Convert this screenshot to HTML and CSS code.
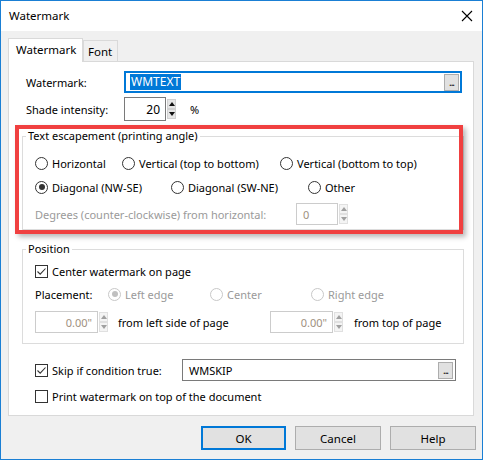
FILE: index.html
```html
<!DOCTYPE html>
<html>
<head>
<meta charset="utf-8">
<link rel="stylesheet" href="styles.css">
</head>
<body>
<div class="window">
  <div class="titlebar">
    <span class="title">Watermark</span>
    <svg class="close" width="12" height="12" viewBox="0 0 12 12"><path d="M1 1 L11 11 M11 1 L1 11" stroke="#000" stroke-width="1.1" fill="none"/></svg>
  </div>
  <div class="body">
    <div class="tabs">
      <div class="tab active">Watermark</div>
      <div class="tab">Font</div>
    </div>
    <div class="panel">
      <div class="row r-wm">
        <span class="lbl">Watermark:</span>
        <div class="input wm"><span class="sel">WMTEXT</span><span class="dots">...</span></div>
      </div>
      <div class="row r-shade">
        <span class="lbl">Shade intensity:</span>
        <div class="spinbox shade"><span class="val">20</span></div>
        <div class="arrows"><span class="up"></span><span class="down"></span></div>
        <span class="pct">%</span>
      </div>

      <div class="escwrap">
        <fieldset class="group esc">
          <legend>Text escapement (printing angle)</legend>
          <div class="opts r1">
            <span class="opt w-h"><i class="radio"></i>Horizontal</span>
            <span class="opt w-v1"><i class="radio"></i>Vertical (top to bottom)</span>
            <span class="opt"><i class="radio"></i>Vertical (bottom to top)</span>
          </div>
          <div class="opts r2">
            <span class="opt w-d1"><i class="radio on"></i>Diagonal (NW-SE)</span>
            <span class="opt w-d2"><i class="radio"></i>Diagonal (SW-NE)</span>
            <span class="opt"><i class="radio"></i>Other</span>
          </div>
          <div class="opts r3">
            <span class="dis deg">Degrees (counter-clockwise) from horizontal:</span>
            <div class="spinbox disbox degbox"><span class="val left">0</span></div>
            <div class="arrows dis-arrows"><span class="up"></span><span class="down"></span></div>
          </div>
        </fieldset>
        <div class="redbox"></div>
      </div>

      <fieldset class="group pos">
        <legend>Position</legend>
        <div class="opts c1">
          <span class="opt"><i class="check"><svg width="11" height="11" viewBox="0 0 11 11"><path d="M1.5 5.5 L4.2 8.2 L9.5 2.5" stroke="#333" stroke-width="1.1" fill="none"/></svg></i>Center watermark on page</span>
        </div>
        <div class="opts c2">
          <span class="plc">Placement:</span>
          <span class="opt dis w-le"><i class="radio dr on"></i>Left edge</span>
          <span class="opt dis w-ce"><i class="radio dr"></i>Center</span>
          <span class="opt dis"><i class="radio dr"></i>Right edge</span>
        </div>
        <div class="opts c3">
          <div class="spinbox disbox posbox"><span class="val dval">0.00"</span></div>
          <div class="arrows dis-arrows"><span class="up"></span><span class="down"></span></div>
          <span class="from1">from left side of page</span>
          <div class="spinbox disbox posbox pb2"><span class="val dval">0.00"</span></div>
          <div class="arrows dis-arrows"><span class="up"></span><span class="down"></span></div>
          <span class="from2">from top of page</span>
        </div>
      </fieldset>

      <div class="row r-skip">
        <span class="opt w-skip"><i class="check"><svg width="11" height="11" viewBox="0 0 11 11"><path d="M1.5 5.5 L4.2 8.2 L9.5 2.5" stroke="#333" stroke-width="1.1" fill="none"/></svg></i>Skip if condition true:</span>
        <div class="input skip"><span class="txt">WMSKIP</span><span class="dots">...</span></div>
      </div>
      <div class="row r-print">
        <span class="opt"><i class="check"></i>Print watermark on top of the document</span>
      </div>
    </div>
    <div class="buttons">
      <button class="btn default">OK</button>
      <button class="btn">Cancel</button>
      <button class="btn">Help</button>
    </div>
  </div>
</div>
</body>
</html>
```

FILE: styles.css
```css
* { box-sizing: border-box; }
html, body { margin: 0; padding: 0; }
body {
  font-family: "Noto Sans", "Open Sans", sans-serif;
  font-size: 11px;
  color: #000;
  background: #fff;
}
.window {
  width: 483px;
  height: 460px;
  border: 1px solid #1a7fd4;
  display: flex;
  flex-direction: column;
  background: #f0f0f0;
}
.titlebar {
  height: 30px;
  background: #fff;
  display: flex;
  align-items: center;
  justify-content: space-between;
  padding: 0 9px 0 8px;
}
.title { font-size: 11.5px; line-height: 16px; }
.close { display: block; }
.body { flex: 1; padding: 7px 0 0 7px; }

.tabs { display: flex; align-items: flex-end; height: 23px; position: relative; z-index: 2; }
.tab {
  height: 21px;
  padding: 0 5px 0 4px;
  border: 1px solid #d9d9d9;
  border-bottom: none;
  line-height: 21px;
  background: #f0f0f0;
  font-size: 11.5px;
}
.tab.active {
  height: 24px;
  width: 75px;
  background: #fff;
  padding: 0 0 0 7px;
  line-height: 21px;
  margin-bottom: -1px;
}
.panel {
  width: 466px;
  height: 355px;
  background: #fff;
  border: 1px solid #d9d9d9;
  display: flex;
  flex-direction: column;
  position: relative;
}
.row { display: flex; align-items: center; }
.lbl { width: 98px; margin-left: 17px; }
.r-wm { margin-top: 9px; height: 22px; }
.input {
  height: 22px;
  border: 1px solid #7a7a7a;
  background: #fff;
  display: flex;
  align-items: center;
  justify-content: space-between;
  padding: 0 2px 0 5px;
}
.input.wm { width: 338px; border: 1px solid #0078d7; box-shadow: inset 0 0 0 1px #0078d7; padding-left: 5px; }
.sel { background: #0078d7; color: #fff; padding: 0 1px; line-height: 16px; font-size: 12px; }
.dots {
  width: 15px; height: 17px;
  background: #e1e1e1;
  border: 1px solid #adadad;
  font-size: 10px;
  line-height: 15px;
  text-align: center;
  letter-spacing: -1px;
}
.r-shade { margin-top: 4px; height: 24px; }
.spinbox {
  border: 1px solid #7a7a7a;
  background: #fff;
  display: flex;
  align-items: center;
  justify-content: flex-end;
  padding: 0 5px;
}
.spinbox.shade { width: 42px; height: 24px; font-size: 12px; }
.val.left { margin-right: auto; }
.arrows {
  display: flex;
  flex-direction: column;
  justify-content: space-between;
  width: 11px;
  height: 22px;
  padding: 1px 1px;
}
.arrows span {
  position: relative;
  display: block;
  height: 10px;
  background: #e5e5e5;
  border: 1px solid #d0d0d0;
}
.arrows .up::after, .arrows .down::after {
  content: "";
  position: absolute;
  left: 50%;
  top: 50%;
  margin-left: -3px;
  border-left: 3px solid transparent;
  border-right: 3px solid transparent;
}
.arrows .up::after { border-bottom: 4px solid #111; margin-top: -2px; }
.arrows .down::after { border-top: 4px solid #111; margin-top: -2px; }
.dis-arrows span { background: #f4f4f4; border-color: #e0e0e0; }
.dis-arrows .up::after { border-bottom-color: #a0a0a0; }
.dis-arrows .down::after { border-top-color: #a0a0a0; }
.pct { margin-left: 13px; }

.escwrap { position: relative; margin-top: 7px; }
.group {
  margin: 0 0 0 13px;
  padding: 0 0 0 12px;
  width: 442px;
  border: 1px solid #dcdcdc;
  min-width: 0;
}
.group legend {
  padding: 0 2px;
  margin-left: -9px;
  line-height: 16px;
}
.esc { height: 102px; }
.redbox {
  position: absolute;
  left: 6px;
  top: -3px;
  width: 448px;
  height: 109px;
  border: 4px solid #f04040;
  box-shadow: 3px 3px 5px rgba(0,0,0,0.28);
  pointer-events: none;
}
.opts { display: flex; align-items: center; height: 16px; white-space: nowrap; }
.opt { display: flex; align-items: center; }
.radio {
  display: inline-block;
  width: 13px; height: 13px;
  border: 1px solid #333;
  border-radius: 50%;
  margin-right: 4px;
  position: relative;
  background: #fff;
}
.radio.on::after {
  content: "";
  position: absolute;
  left: 2.5px; top: 2.5px;
  width: 6px; height: 6px;
  border-radius: 50%;
  background: #333;
}
.radio.dr { border-color: #c8c8c8; }
.radio.dr.on::after { background: #c0c0c0; }
.check {
  display: inline-flex;
  align-items: center;
  justify-content: center;
  width: 13px; height: 13px;
  border: 1px solid #333;
  margin-right: 4px;
  background: #fff;
}
.r1 { margin-top: 11px; }
.w-h { width: 87px; }
.w-v1 { width: 158px; }
.r2 { margin-top: 8px; }
.w-d1 { width: 136px; }
.w-d2 { width: 137px; }
.r3 { margin-top: 8px; height: 22px; }
.dis { color: #9a9a9a; }
.deg { width: 261px; }
.disbox { border-color: #cccccc; color: #a09080; }
.degbox { width: 42px; height: 22px; padding-left: 6px; }
.dval { color: #a09080; }

.pos { margin-top: 11px; height: 103px; }
.c1 { margin-top: 6px; }
.c2 { margin-top: 7px; }
.plc { width: 73px; }
.w-le { width: 102px; }
.w-ce { width: 101px; }
.c3 { margin-top: 9px; height: 22px; }
.posbox { width: 63px; height: 22px; }
.from1 { margin-left: 9px; width: 152px; }
.from2 { margin-left: 10px; }

.r-skip { margin-top: 15px; height: 22px; padding-left: 26px; }
.w-skip { width: 147px; }
.input.skip { width: 274px; padding-left: 6px; }
.r-print { margin-top: 7px; height: 16px; padding-left: 26px; }

.buttons {
  display: flex;
  justify-content: flex-end;
  gap: 9px;
  margin-top: 10px;
  padding-right: 6px;
}
.btn {
  width: 86px;
  height: 24px;
  background: #e1e1e1;
  border: 1px solid #adadad;
  font: inherit;
  font-size: 11.5px;
  color: #000;
  padding: 0;
}
.btn.default { border: 2px solid #0078d7; width: 85px; }
```
